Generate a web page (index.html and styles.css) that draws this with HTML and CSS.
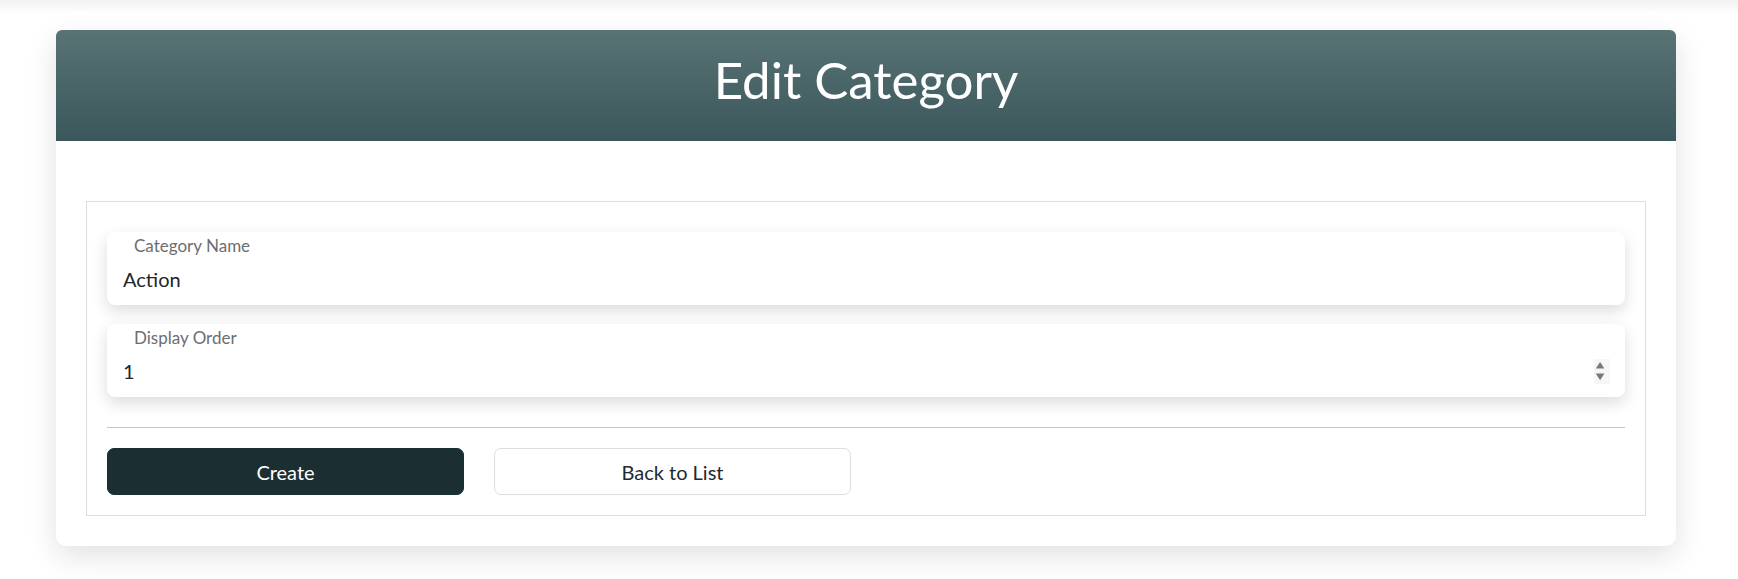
FILE: index.html
```html
<!DOCTYPE html>
<html lang="en">
<head>
<meta charset="utf-8">
<title>Edit Category</title>
<link rel="stylesheet" href="styles.css">
</head>
<body>
<div class="topband"></div>
<main class="page">
  <section class="card">
    <header class="card-header">
      <h1 class="card-title">Edit Category</h1>
    </header>
    <div class="card-body">
      <form class="form-box">
        <div class="field">
          <label class="field-label" for="name">Category Name</label>
          <input class="field-input" id="name" type="text" value="Action">
        </div>
        <div class="field">
          <label class="field-label" for="order">Display Order</label>
          <input class="field-input" id="order" type="text" value="1">
          <svg class="spinner" width="16" height="25" viewBox="0 0 16 25" aria-hidden="true">
            <rect x="0" y="0" width="16" height="25" fill="#f6f6f6"/>
            <polygon points="1.8,9.6 10.4,9.6 6.1,3" fill="#787878"/>
            <polygon points="1.8,14.4 10.4,14.4 6.1,21.2" fill="#787878"/>
          </svg>
        </div>
        <hr class="divider">
        <div class="actions">
          <button type="button" class="btn btn-primary">Create</button>
          <button type="button" class="btn btn-outline">Back to List</button>
        </div>
      </form>
    </div>
  </section>
</main>
</body>
</html>
```
FILE: styles.css
```css
* { box-sizing: border-box; }
html, body { margin: 0; padding: 0; background: #fff; }
body {
  font-family: Lato, "Open Sans", "Liberation Sans", sans-serif;
  color: #212529;
  width: 1738px;
  height: 579px;
  overflow: hidden;
}
.topband {
  height: 14px;
  margin-bottom: -14px;
  background: linear-gradient(#f3f3f3, #f7f7f7 6px, #ffffff 14px);
}
.page {
  padding: 30px 0 0 56px;
}
.card {
  width: 1620px;
  background: #fff;
  border-radius: 6px 6px 10px 10px;
  box-shadow: 0 10px 30px rgba(0, 0, 0, 0.12);
}
.card-header {
  height: 111px;
  border-radius: 6px 6px 0 0;
  background: linear-gradient(#597375, #3a575b);
  display: flex;
  align-items: center;
  justify-content: center;
}
.card-title {
  margin: 0;
  color: #fff;
  font-weight: 400;
  font-size: 51px;
  line-height: 60px;
  padding-bottom: 12px;
}
.card-body {
  padding: 60px 30px 30px 30px;
}
.form-box {
  margin: 0;
  border: 1px solid #dedede;
  padding: 30px 20px 20px 20px;
  display: flex;
  flex-direction: column;
}
.field {
  position: relative;
  height: 73px;
  background: #fff;
  border-radius: 8px;
  box-shadow: 0 6px 16px rgba(0, 0, 0, 0.14);
  padding-top: 3.5px;
}
.field + .field { margin-top: 19px; }
.field-label {
  display: block;
  font-size: 17px;
  line-height: 20px;
  padding-left: 27px;
  color: #6b6e72;
}
.field-input {
  display: block;
  width: 100%;
  margin-top: 8px;
  height: 30px;
  border: 0;
  outline: none;
  background: transparent;
  padding: 0 16px;
  font-family: inherit;
  font-size: 20px;
  line-height: 30px;
  color: #212529;
}
.spinner {
  position: absolute;
  right: 15px;
  top: 35px;
}
.divider {
  margin: 30px 0 0 0;
  border: 0;
  border-top: 1px solid #c6c6c6;
  height: 0;
}
.actions {
  display: flex;
  gap: 30px;
  margin-top: 20px;
}
.btn {
  width: 357px;
  height: 47px;
  border-radius: 7px;
  font-family: inherit;
  font-size: 20px;
  line-height: 30px;
  padding: 0;
  cursor: pointer;
}
.btn-primary {
  background: #1b2e31;
  border: 1px solid #1b2e31;
  color: #fff;
}
.btn-outline {
  background: #fff;
  border: 1px solid #dcdee4;
  color: #1e2a33;
}
```
